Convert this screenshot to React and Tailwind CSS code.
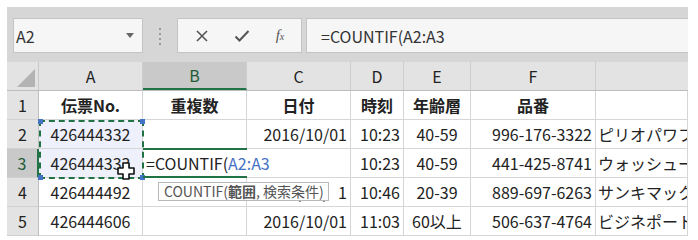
import React from "react";

const font = { fontFamily: '"Noto Sans CJK JP", "Noto Sans", sans-serif' };

const cols = [
  { key: "A", w: "w-[104px]" },
  { key: "B", w: "w-[104px]" },
  { key: "C", w: "w-[104px]" },
  { key: "D", w: "w-[53px]" },
  { key: "E", w: "w-[67px]" },
  { key: "F", w: "w-[125px]" },
  { key: "G", w: "w-[92px]" },
];

const rows = [
  { n: 1, cells: ["伝票No.", "重複数", "日付", "時刻", "年齢層", "品番", ""], bold: true },
  { n: 2, cells: ["426444332", "", "2016/10/01", "10:23", "40-59", "996-176-3322", "ピリオパワフル"] },
  { n: 3, cells: ["426444333", "", "", "10:23", "40-59", "441-425-8741", "ウォッシュール"] },
  { n: 4, cells: ["426444492", "", "2016/10/01", "10:46", "20-39", "889-697-6263", "サンキマックス"] },
  { n: 5, cells: ["426444606", "", "2016/10/01", "11:03", "60以上", "506-637-4764", "ビジネポート"] },
];

// alignment per column for data rows
const align = ["justify-center", "justify-center", "justify-end", "justify-end", "justify-center", "justify-end", "justify-start"];

function MoveCursor() {
  return (
    <svg width="18" height="18" viewBox="0 0 18 18" className="absolute left-[110px] top-[155px]">
      <path
        d="M6 1h6v5h5v6h-5v5H6v-5H1V6h5z"
        fill="#fff"
        stroke="#111"
        strokeWidth="1.6"
        strokeLinejoin="round"
      />
    </svg>
  );
}

export default function App() {
  return (
    <div className="w-[698px] h-[240px] bg-white overflow-hidden pt-[7px] pl-[7px] text-[#222]" style={font}>
      <div className="w-[681px] relative">
        {/* Formula bar */}
        <div className="h-[55px] bg-[#d6d6d6] flex items-start pt-[11px] pl-[6px]">
          <div className="w-[130px] h-[35px] bg-[#f6f6f6] border border-[#c4c4c4] flex items-center justify-between pl-[2px] pr-[8px]">
            <span className="text-[16px] text-[#333]">A2</span>
            <svg width="8" height="5" viewBox="0 0 8 5">
              <path d="M0 0h8L4 5z" fill="#666" />
            </svg>
          </div>
          <div className="w-[34px] flex flex-col items-center gap-[3px] pt-[10px]">
            <span className="w-[2px] h-[2px] bg-[#999]" />
            <span className="w-[2px] h-[2px] bg-[#999]" />
            <span className="w-[2px] h-[2px] bg-[#999]" />
            <span className="w-[2px] h-[2px] bg-[#999]" />
          </div>
          <div className="w-[125px] h-[35px] bg-[#f6f6f6] border border-[#c4c4c4] flex items-center justify-around px-[4px]">
            <svg width="14" height="14" viewBox="0 0 14 14">
              <path d="M2 2l10 10M12 2L2 12" stroke="#555" strokeWidth="1.6" />
            </svg>
            <svg width="16" height="14" viewBox="0 0 16 14">
              <path d="M1.5 7.5l4 4L14.5 2" stroke="#555" strokeWidth="2" fill="none" />
            </svg>
            <span className="text-[15px] italic text-[#555]" style={{ fontFamily: '"Liberation Serif", serif' }}>
              f<span className="text-[10px]">x</span>
            </span>
          </div>
          <div className="ml-[4px] flex-1 h-[35px] bg-[#f6f6f6] border border-r-0 border-[#c4c4c4] flex items-center pl-[14px]">
            <span className="text-[16px] text-[#333]">=COUNTIF(A2:A3</span>
          </div>
        </div>

        {/* Column headers */}
        <div className="flex h-[29px] bg-[#e3e3e3] border-b border-[#bdbdbd]">
          <div className="w-[32px] border-r border-[#c8c8c8] flex items-end justify-end p-[3px]">
            <svg width="18" height="18" viewBox="0 0 18 18">
              <path d="M18 0v18H0z" fill="#b3b3b3" />
            </svg>
          </div>
          {cols.map((c) => (
            <div
              key={c.key}
              className={`${c.w} shrink-0 flex items-center justify-center text-[16px] border-r border-[#cdcdcd] ${
                c.key === "B" ? "bg-[#c9c9c9] border-b-2 border-b-[#217346] text-[#1e5c37]" : ""
              } ${c.key === "G" ? "border-r-0" : ""}`}
            >
              {c.key === "G" ? "" : c.key}
            </div>
          ))}
        </div>

        {/* Rows */}
        {rows.map((r) => (
          <div key={r.n} className="flex h-[29px] bg-white">
            <div
              className={`w-[32px] shrink-0 flex items-center justify-center text-[16px] border-b border-[#d0d0d0] ${
                r.n === 3 ? "bg-[#c9c9c9] border-r-2 border-r-[#217346] text-[#1e5c37]" : "bg-[#e3e3e3] border-r border-r-[#bdbdbd]"
              }`}
            >
              {r.n}
            </div>
            {cols.map((c, i) => {
              const txt = r.cells[i];
              const isB3 = r.n === 3 && c.key === "B";
              const sel = c.key === "A" && (r.n === 2 || r.n === 3);
              return (
                <div
                  key={c.key}
                  className={`${c.w} shrink-0 flex items-center whitespace-nowrap text-[16px] border-b border-[#d6d6d6] ${
                    r.bold ? "justify-center font-bold" : align[i]
                  } ${c.key === "G" ? "overflow-hidden pl-[2px]" : "px-[3px]"} ${
                    isB3 ? "border-t-2 border-t-[#217346] border-b-2 border-b-[#217346] justify-start! px-[2px] -mt-[1px] relative z-10" : "border-r border-r-[#d6d6d6]"
                  } ${sel ? "bg-[#eef1fb]" : ""}`}
                >
                  {isB3 ? (
                    <span>
                      =COUNTIF(<span className="text-[#4472c4]">A2:A3</span>
                    </span>
                  ) : (
                    txt
                  )}
                </div>
              );
            })}
          </div>
        ))}

        {/* Reference range outline A2:A3 */}
        <div className="absolute left-[32px] top-[113px] w-[105px] h-[59px] border-2 border-dashed border-[#217346] pointer-events-none">
          <span className="absolute -left-[3px] -top-[3px] w-[5px] h-[5px] bg-[#4472c4]" />
          <span className="absolute -right-[3px] -top-[3px] w-[5px] h-[5px] bg-[#4472c4]" />
          <span className="absolute -left-[3px] -bottom-[3px] w-[5px] h-[5px] bg-[#4472c4]" />
          <span className="absolute -right-[3px] -bottom-[3px] w-[5px] h-[5px] bg-[#4472c4]" />
        </div>

        <MoveCursor />

        {/* Function tooltip */}
        <div className="absolute left-[151px] top-[175px] w-[171px] h-[19px] px-[5px] bg-white border border-[#b8b8b8] shadow-[9px_0_0_0_#fff] flex items-center text-[14px] text-[#555] whitespace-nowrap overflow-hidden">
          COUNTIF(<span className="font-bold">範囲</span>, 検索条件)
        </div>
      </div>
    </div>
  );
}
